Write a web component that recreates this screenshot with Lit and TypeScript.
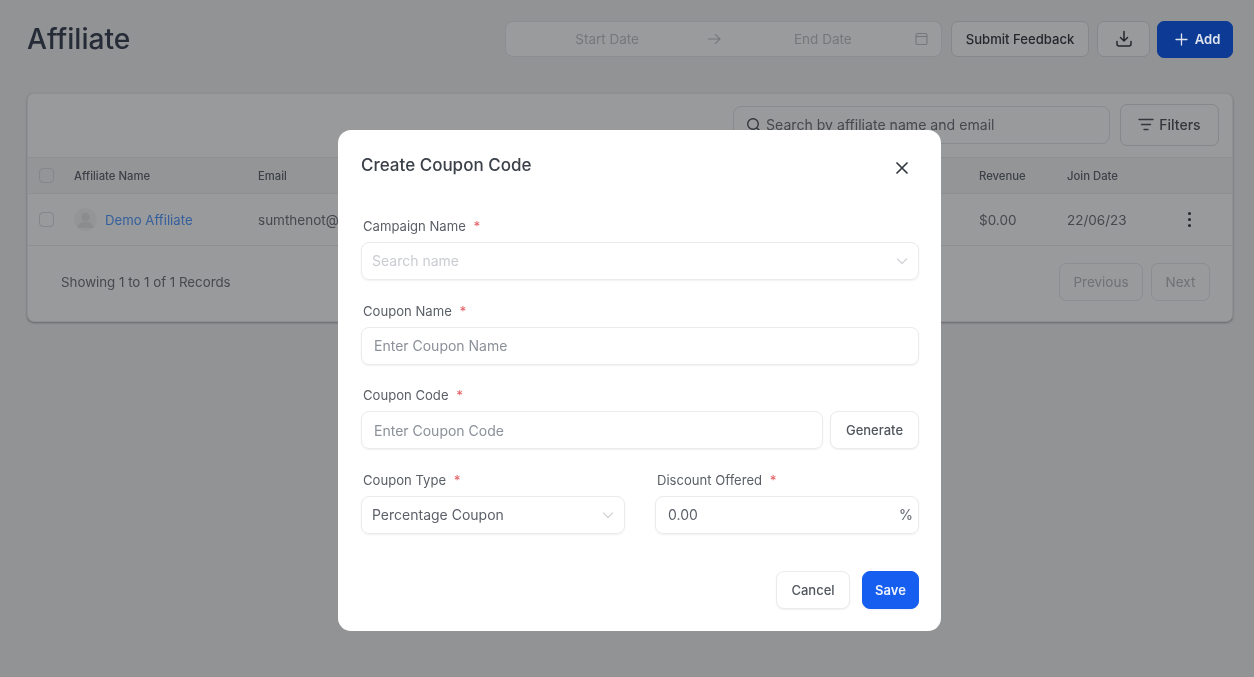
import { LitElement, html, css } from "lit";
import { customElement } from "lit/decorators.js";

const chevron = html`<svg class="chev" width="14" height="14" viewBox="0 0 14 14" fill="none" stroke="#d0d2d6" stroke-width="1.2" stroke-linecap="round" stroke-linejoin="round"><path d="M2.5 5l4.5 4.5L11.5 5"/></svg>`;

@customElement("app-root")
export class AppRoot extends LitElement {
  static styles = css`
    :host { display: block; width: 1254px; height: 677px; position: relative; overflow: hidden; background: #929395; font-family: Inter, "Liberation Sans", sans-serif; color: #33383f; filter: blur(0.55px); }
    * { box-sizing: border-box; }
    .page { padding: 20px 21px 0 27px; display: flex; flex-direction: column; gap: 35px; }
    .top { display: flex; align-items: center; height: 38px; }
    h1 { margin: 0; padding-bottom: 1px; font-size: 28.2px; font-weight: 500; color: #262c37; flex: 1; line-height: 36px; }
    .btn { height: 36px; display: flex; align-items: center; justify-content: center; gap: 6px; border: 1.5px solid #85878a; border-radius: 7px; background: #989a9c; font-size: 13.1px; font-weight: 500; color: #24272c; }
    .dates { width: 437px; height: 36px; display: grid; grid-template-columns: 133px 150px 1fr 13px; align-items: center; border: 1.5px solid #8b8d90; border-radius: 8px; background: #999b9d; font-size: 13.5px; color: #75777a; margin-right: 9px; padding-right: 13px; }
    .dates .s { text-align: right; }
    .dates .a { text-align: center; display: flex; justify-content: center; }
    .dates .e { padding-left: 5px; }
    .feedback { width: 138px; margin-right: 8px; }
    .dl { width: 53px; margin-right: 7px; }
    .add { width: 76px; height: 37px; background: #0c3a94; border-color: #0c3a94; color: #dfe4ee; gap: 7px; padding-left: 5px; font-size: 13.1px; font-weight: 600; }
    .card { height: 229px; background: #999a9c; border: 1px solid #8d8f91; border-radius: 7px; box-shadow: 0 1px 2px rgba(60,60,65,.5); display: flex; flex-direction: column; }
    .tools { height: 63px; display: flex; justify-content: flex-end; align-items: center; padding: 0 13px 2px 0; gap: 10px; }
    .search { width: 377px; height: 38px; border: 1.5px solid #898b8e; border-radius: 8px; display: flex; align-items: center; gap: 5px; padding-left: 12px; font-size: 14.1px; color: #45484d; }
    .filters { width: 99px; height: 42px; font-size: 14px; color: #33363b; gap: 5px; }
    .row { display: grid; grid-template-columns: 46px 184px 721px 88px 1fr; align-items: center; }
    .head { height: 37px; background: #949597; border-top: 1px solid #8d8f91; border-bottom: 1px solid #8d8f91; font-size: 11.3px; font-weight: 500; color: #3c4047; }
    .body { height: 52px; border-bottom: 1px solid #8d8f91; font-size: 13.5px; color: #45484d; }
    .cb { width: 15px; height: 15px; margin-left: 11px; border: 1.5px solid #83868a; border-radius: 4px; }
    .who { display: flex; align-items: center; gap: 8px; color: #35609e; font-size: 13.2px; }
    .avatar { width: 23px; height: 23px; border-radius: 50%; display: block; }
    .last { display: flex; justify-content: space-between; padding-right: 41px; }
    .dots { display: flex; flex-direction: column; gap: 3px; align-items: center; justify-content: center; }
    .dots i { width: 3px; height: 3px; border-radius: 50%; background: #24272c; display: block; }
    .foot { flex: 1; display: flex; align-items: center; justify-content: space-between; padding: 0 22px 4px 33px; font-size: 13.3px; color: #46494e; }
    .pager { display: flex; gap: 8px; }
    .pager div { height: 38px; border: 1.5px solid #8b8d90; border-radius: 7px; display: flex; align-items: center; justify-content: center; color: #6f7174; font-size: 13.5px; }
    .prev { width: 84px; } .next { width: 59px; }

    .modal { position: absolute; left: 338px; top: 130px; width: 603px; height: 501px; background: #fff; border-radius: 13px; padding: 0 22px 0 23px; display: flex; flex-direction: column; }
    .mhead { height: 88px; display: flex; justify-content: space-between; align-items: flex-start; padding-top: 24px; }
    h2 { margin: 0; font-size: 17px; font-weight: 500; color: #3b4149; line-height: 22px; }
    .x { margin: 8px 11px 0 0; display: block; }
    .form { display: flex; flex-direction: column; gap: 22.5px; }
    .field { display: flex; flex-direction: column; gap: 7px; flex: 1; min-width: 0; }
    label { font-size: 13.1px; line-height: 17px; color: #5a5f66; padding-left: 2px; height: 17px; }
    label b { color: #e5676b; font-weight: 500; margin-left: 4px; }
    .in { height: 38px; border: 1.5px solid #eaebee; border-radius: 8px; box-shadow: 0 1px 2px rgba(20,25,40,.06); display: flex; align-items: center; justify-content: space-between; padding: 0 9px 0 12px; font-size: 14px; color: #8b9099; }
    .in.sel { padding-left: 10px; }
    .in.ph { color: #c9ccd1; }
    .in.ph span { margin-top: -1px; }
    .in.val { color: #5c6169; }
    .cols { display: flex; gap: 30px; }
    .gen { display: flex; gap: 7px; }
    .wbtn { height: 38px; border: 1.5px solid #eaebee; border-radius: 8px; background: #fff; display: flex; align-items: center; justify-content: center; font-size: 13px; font-weight: 500; color: #50555c; box-shadow: 0 1px 2px rgba(20,25,40,.06); }
    .grow { flex: 1; }
    .generate { width: 89px; flex: none; }
    .pct { color: #6b7078; font-size: 14px; font-weight: 500; margin-right: -4px; }
    .actions { display: flex; justify-content: flex-end; gap: 12px; margin-top: 37px; }
    .cancel { width: 74px; }
    .save { width: 57px; background: #155eef; border-color: #155eef; color: #eef3ff; font-weight: 600; }
  `;

  render() {
    return html`
      <div class="page">
        <div class="top">
          <h1>Affiliate</h1>
          <div class="dates">
            <span class="s">Start Date</span>
            <span class="a"><svg width="14" height="12" viewBox="0 0 14 12" fill="none" stroke="#75777a" stroke-width="1.1"><path d="M1 6h12M8 1.2L13 6l-5 4.8"/></svg></span>
            <span class="e">End Date</span>
            <svg width="13" height="14" viewBox="0 0 13 14" fill="none" stroke="#75777a" stroke-width="1.1"><rect x="1" y="1.5" width="11" height="11" rx="1.5"/><path d="M1 4.5h11"/></svg>
          </div>
          <div class="btn feedback">Submit Feedback</div>
          <div class="btn dl"><svg width="18" height="18" viewBox="0 0 18 18" fill="none" stroke="#24272c" stroke-width="1.5" stroke-linecap="round" stroke-linejoin="round"><path d="M9 1.5v9.5M5.5 7.5L9 11l3.5-3.5M2 11.5v2.5a2 2 0 0 0 2 2h10a2 2 0 0 0 2-2v-2.5"/></svg></div>
          <div class="btn add"><svg width="13" height="13" viewBox="0 0 13 13" fill="none" stroke="#dfe4ee" stroke-width="1.3" stroke-linecap="round"><path d="M6.5 1v11M1 6.5h11"/></svg>Add</div>
        </div>
        <div class="card">
          <div class="tools">
            <div class="search">
              <svg width="15" height="15" viewBox="0 0 15 15" fill="none" stroke="#33363b" stroke-width="1.4" stroke-linecap="round"><circle cx="7" cy="7" r="5.3"/><path d="M11 11l2.5 2.5"/></svg>
              Search by affiliate name and email
            </div>
            <div class="btn filters"><svg width="16" height="13" viewBox="0 0 16 13" fill="none" stroke="#33363b" stroke-width="1.4" stroke-linecap="round"><path d="M1 1.5h14M3.5 6.5h9M6 11.5h4"/></svg>Filters</div>
          </div>
          <div class="row head">
            <div class="cb"></div><div>Affiliate Name</div><div>Email</div><div>Revenue</div><div>Join Date</div>
          </div>
          <div class="row body">
            <div class="cb"></div>
            <div class="who"><svg class="avatar" viewBox="0 0 23 23"><circle cx="11.5" cy="11.5" r="11.5" fill="#949597"/><circle cx="11.5" cy="9" r="4" fill="#8b8c8e"/><path d="M3.5 20a8 6.5 0 0 1 16 0z" fill="#8b8c8e"/></svg>Demo Affiliate</div>
            <div>sumthenot@</div>
            <div>$0.00</div>
            <div class="last"><span>22/06/23</span><span class="dots"><i></i><i></i><i></i></span></div>
          </div>
          <div class="foot">
            <span>Showing 1 to 1 of 1 Records</span>
            <div class="pager"><div class="prev">Previous</div><div class="next">Next</div></div>
          </div>
        </div>
      </div>

      <div class="modal">
        <div class="mhead">
          <h2>Create Coupon Code</h2>
          <svg class="x" width="12" height="12" viewBox="0 0 12 12" fill="none" stroke="#33383f" stroke-width="1.7" stroke-linecap="round"><path d="M1 1l10 10M11 1L1 11"/></svg>
        </div>
        <div class="form">
          <div class="field"><label>Campaign Name <b>*</b></label><div class="in sel ph"><span>Search name</span>${chevron}</div></div>
          <div class="field"><label>Coupon Name <b>*</b></label><div class="in"><span>Enter Coupon Name</span></div></div>
          <div class="field"><label>Coupon Code <b>*</b></label>
            <div class="gen"><div class="in grow"><span>Enter Coupon Code</span></div><div class="wbtn generate">Generate</div></div>
          </div>
          <div class="cols">
            <div class="field"><label>Coupon Type <b>*</b></label><div class="in sel val"><span>Percentage Coupon</span>${chevron}</div></div>
            <div class="field"><label>Discount Offered <b>*</b></label><div class="in val"><span>0.00</span><span class="pct">%</span></div></div>
          </div>
        </div>
        <div class="actions"><div class="wbtn cancel">Cancel</div><div class="wbtn save">Save</div></div>
      </div>
    `;
  }
}
